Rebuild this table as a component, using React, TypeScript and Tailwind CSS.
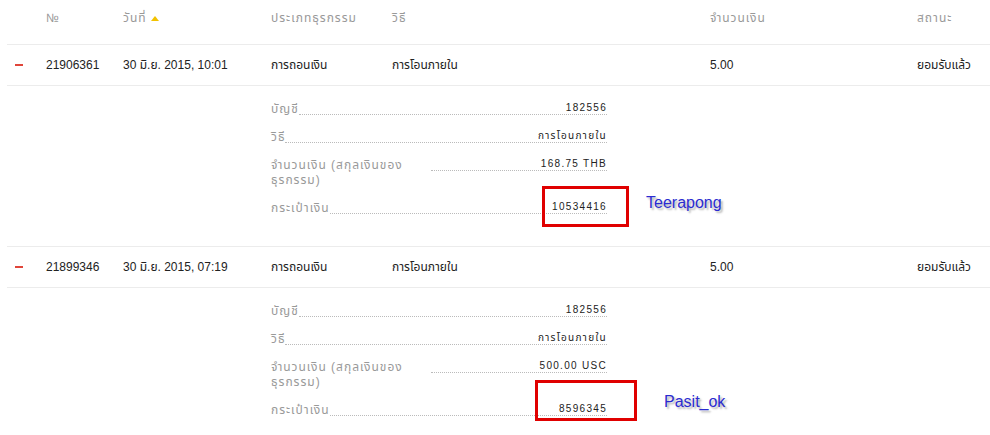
import React from "react";

const cols = "grid grid-cols-[39px_77px_148px_121px_318px_207px_1fr]";

type Detail = { label: string; value: string };

function DetailRow({ label, value }: Detail) {
  return (
    <div className="flex items-start w-[336px] mb-[13px]">
      <span className="max-w-[160px] leading-[15px] text-[12px] tracking-[1px] text-[#999]">{label}</span>
      <div className="flex-1 border-b border-dotted border-[#bbb] text-right leading-[12px] text-[10px] tracking-[1.3px] text-[#222] whitespace-nowrap">
        {value}
      </div>
    </div>
  );
}

function Minus() {
  return <span className="block w-[8px] h-[2px] bg-[#e0453a] ml-[8px]" />;
}

function Row({ id, date, amount, details }: { id: string; date: string; amount: string; details: Detail[] }) {
  return (
    <>
      <div className={`${cols} h-[41px] items-center border-b border-[#ececec] text-[#222]`}>
        <div><Minus /></div>
        <div>{id}</div>
        <div>{date}</div>
        <div>การถอนเงิน</div>
        <div>การโอนภายใน</div>
        <div>{amount}</div>
        <div>ยอมรับแล้ว</div>
      </div>
      <div className="pl-[264px] pt-[16px] pb-[17px] border-b border-[#ececec]">
        {details.map((d) => (
          <DetailRow key={d.label} {...d} />
        ))}
      </div>
    </>
  );
}

export default function App() {
  return (
    <div
      className="relative w-[990px] h-[435px] overflow-hidden bg-white text-[12px]"
      style={{ fontFamily: '"Liberation Sans", "Noto Sans Thai", "Noto Sans", sans-serif' }}
    >
      <div className="ml-[7px]">
        <div className={`${cols} items-start h-[45px] pt-[10px] border-b border-[#ececec] text-[#999] leading-4 tracking-[1px]`}>
          <div />
          <div className="tracking-normal">№</div>
          <div className="flex items-center gap-[4px] h-4">
            <span>วันที่</span>
            <svg width="8" height="5" viewBox="0 0 8 5"><path d="M0 5 L4 0 L8 5 Z" fill="#f2c200" /></svg>
          </div>
          <div>ประเภทธุรกรรม</div>
          <div>วิธี</div>
          <div>จำนวนเงิน</div>
          <div>สถานะ</div>
        </div>
        <Row
          id="21906361"
          date="30 มิ.ย. 2015, 10:01"
          amount="5.00"
          details={[
            { label: "บัญชี", value: "182556" },
            { label: "วิธี", value: "การโอนภายใน" },
            { label: "จำนวนเงิน (สกุลเงินของธุรกรรม)", value: "168.75 THB" },
            { label: "กระเป๋าเงิน", value: "10534416" },
          ]}
        />
        <Row
          id="21899346"
          date="30 มิ.ย. 2015, 07:19"
          amount="5.00"
          details={[
            { label: "บัญชี", value: "182556" },
            { label: "วิธี", value: "การโอนภายใน" },
            { label: "จำนวนเงิน (สกุลเงินของธุรกรรม)", value: "500.00 USC" },
            { label: "กระเป๋าเงิน", value: "8596345" },
          ]}
        />
      </div>

      <div className="absolute left-[542px] top-[186px] w-[87px] h-[41px] border-[3px] border-[#e00000]" />
      <div className="absolute left-[646px] top-[195px] text-[16px] leading-4 text-[#2b2bd0] [text-shadow:2px_2px_2px_#b0b0b0]">
        Teerapong
      </div>
      <div className="absolute left-[535px] top-[380px] w-[102px] h-[41px] border-[3px] border-[#e00000]" />
      <div className="absolute left-[664px] top-[394px] text-[16px] leading-4 text-[#2b2bd0] [text-shadow:2px_2px_2px_#b0b0b0]">
        Pasit_ok
      </div>
    </div>
  );
}
